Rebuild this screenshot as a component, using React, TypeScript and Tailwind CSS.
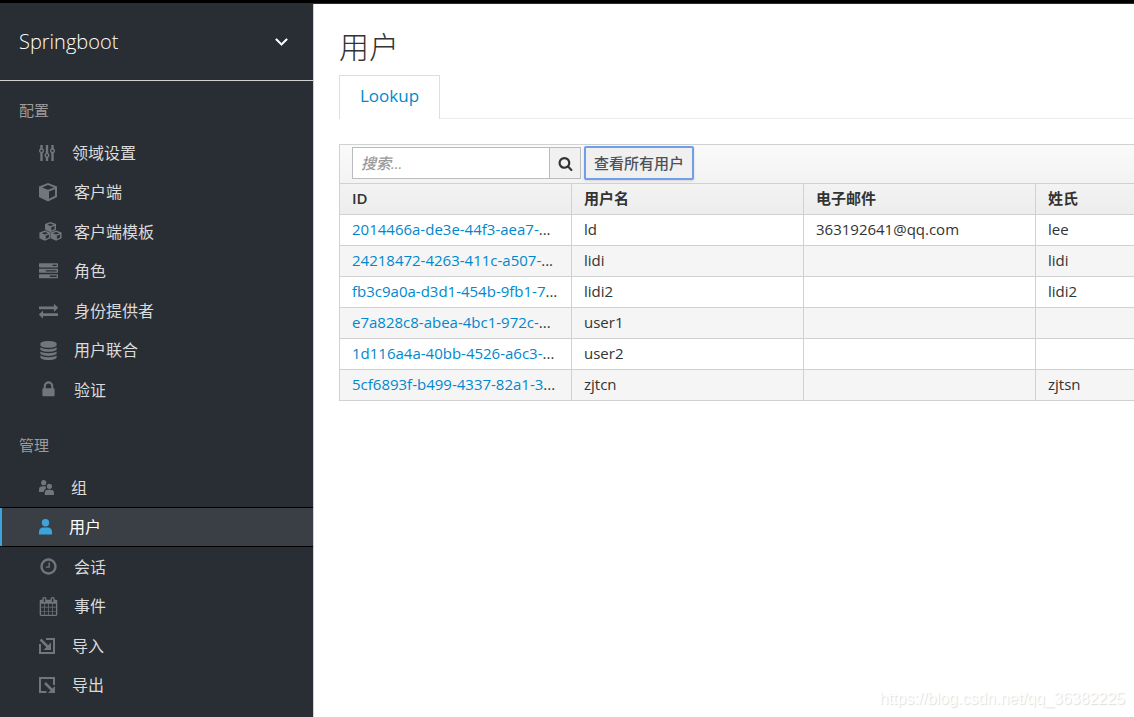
import type { ReactNode } from "react";

const faPaths = {
    angleDown:
        "M1395 736q0 13-10 23l-466 466q-10 10-23 10t-23-10l-466-466q-10-10-10-23t10-23l50-50q10-10 23-10t23 10l393 393 393-393q10-10 23-10t23 10l50 50q10 10 10 23z",
    tasks: "M1024 1408h640v-128h-640v128zm-384-512h1024v-128h-1024v128zm640-512h384v-128h-384v128zm512 832v256q0 26-19 45t-45 19h-1664q-26 0-45-19t-19-45v-256q0-26 19-45t45-19h1664q26 0 45 19t19 45zm0-512v256q0 26-19 45t-45 19h-1664q-26 0-45-19t-19-45v-256q0-26 19-45t45-19h1664q26 0 45 19t19 45zm0-512v256q0 26-19 45t-45 19h-1664q-26 0-45-19t-19-45v-256q0-26 19-45t45-19h1664q26 0 45 19t19 45z",
    exchange:
        "M1792 1184v192q0 13-9.5 22.5t-22.5 9.5h-1376v192q0 13-9.5 22.5t-22.5 9.5q-12 0-24-10l-319-320q-9-9-9-22 0-14 9-23l320-320q9-9 23-9 13 0 22.5 9.5t9.5 22.5v192h1376q13 0 22.5 9.5t9.5 22.5zm0-544q0 14-9 23l-320 320q-9 9-23 9-13 0-22.5-9.5t-9.5-22.5v-192h-1376q-13 0-22.5-9.5t-9.5-22.5v-192q0-13 9.5-22.5t22.5-9.5h1376v-192q0-14 9-23t23-9q12 0 24 10l319 319q9 9 9 23z",
    database:
        "M896 768q237 0 443-43t325-127v170q0 69-103 128t-280 93.5-385 34.5-385-34.5-280-93.5-103-128v-170q119 84 325 127t443 43zm0 768q237 0 443-43t325-127v170q0 69-103 128t-280 93.5-385 34.5-385-34.5-280-93.5-103-128v-170q119 84 325 127t443 43zm0-384q237 0 443-43t325-127v170q0 69-103 128t-280 93.5-385 34.5-385-34.5-280-93.5-103-128v-170q119 84 325 127t443 43zm0-1152q208 0 385 34.5t280 93.5 103 128v128q0 69-103 128t-280 93.5-385 34.5-385-34.5-280-93.5-103-128v-128q0-69 103-128t280-93.5 385-34.5z",
    lock: "M640 768h512v-192q0-106-75-181t-181-75-181 75-75 181v192zm832 96v576q0 40-28 68t-68 28h-960q-40 0-68-28t-28-68v-576q0-40 28-68t68-28h32v-192q0-184 132-316t316-132 316 132 132 316v192h32q40 0 68 28t28 68z",
    clock: "M1024 544v448q0 14-9 23t-23 9h-320q-14 0-23-9t-9-23v-64q0-14 9-23t23-9h224v-352q0-14 9-23t23-9h64q14 0 23 9t9 23zm416 352q0-148-73-273t-198-198-273-73-273 73-198 198-73 273 73 273 198 198 273 73 273-73 198-198 73-273zm224 0q0 209-103 385.5t-279.5 279.5-385.5 103-385.5-103-279.5-279.5-103-385.5 103-385.5 279.5-279.5 385.5-103 385.5 103 279.5 279.5 103 385.5z",
    calendar:
        "M192 1664h288v-288h-288v288zm352 0h320v-288h-320v288zm-352-352h288v-320h-288v320zm352 0h320v-320h-320v320zm-352-384h288v-288h-288v288zm736 736h320v-288h-320v288zm-384-736h320v-288h-320v288zm768 736h288v-288h-288v288zm-384-352h320v-320h-320v320zm-352-864v-288q0-13-9.5-22.5t-22.5-9.5h-64q-13 0-22.5 9.5t-9.5 22.5v288q0 13 9.5 22.5t22.5 9.5h64q13 0 22.5-9.5t9.5-22.5zm736 864h288v-320h-288v320zm-384-384h320v-288h-320v288zm384 0h288v-288h-288v288zm32-480v-288q0-13-9.5-22.5t-22.5-9.5h-64q-13 0-22.5 9.5t-9.5 22.5v288q0 13 9.5 22.5t22.5 9.5h64q13 0 22.5-9.5t9.5-22.5zm384-64v1280q0 52-38 90t-90 38h-1408q-52 0-90-38t-38-90v-1280q0-52 38-90t90-38h128v-96q0-66 47-113t113-47h64q66 0 113 47t47 113v96h384v-96q0-66 47-113t113-47h64q66 0 113 47t47 113v96h128q52 0 90 38t38 90z",
    search: "M1216 832q0-185-131.500-316.500t-316.500-131.500-316.500 131.500-131.500 316.500 131.500 316.500 316.500 131.500 316.500-131.500 131.500-316.500zm512 832q0 52-38 90t-90 38q-54 0-90-38l-343-342q-179 124-399 124-143 0-273.500-55.500t-225-150-150-225-55.500-273.500 55.500-273.500 150-225 225-150 273.500-55.500 273.500 55.500 225 150 150 225 55.500 273.500q0 220-124 399l343 343q37 37 37 90z",
};

function FaIcon({
    name,
    className = "size-[19px]",
}: {
    name: keyof typeof faPaths;
    className?: string;
}) {
    return (
        <svg viewBox="0 0 1792 1792" fill="currentColor" className={className}>
            <path d={faPaths[name]} />
        </svg>
    );
}

const cubePath =
    "M9 0 18 3.500V14L9 18.500 0 14V3.500ZM9 2 3 4.400 9 6.700 15 4.400ZM10 8.600V15.700L16 12.700V6.300Z";

function CubeIcon() {
    return (
        <svg viewBox="0 0 18 19" fill="currentColor" fillRule="evenodd" className="h-[19px] w-[18px]">
            <path d={cubePath} />
        </svg>
    );
}

// same cube with thicker edges, so that it stays readable at a small size
const smallCubePath =
    "M5.900 0 11.400 2V7.800L5.900 10.300 0.400 7.800V2ZM5.900 1.500 2.700 2.700 5.900 3.900 9.100 2.700ZM6.700 5.200V8.500L9.900 7V3.900Z";

function CubesIcon() {
    return (
        <svg viewBox="0 0 23 19" fill="currentColor" fillRule="evenodd" className="h-[19px] w-[23px]">
            <path d={smallCubePath} transform="translate(5.600 0)" />
            <path d={smallCubePath} transform="translate(0 8.500)" />
            <path d={smallCubePath} transform="translate(11.200 8.500)" />
        </svg>
    );
}

function SlidersIcon() {
    return (
        <svg viewBox="0 0 16 16" fill="none" stroke="currentColor" strokeWidth="2.400" className="size-4">
            <path d="M2.500 0v4M2.500 8v8M8 0v8M8 12v4M13.500 0v4M13.500 8v8" />
            <g strokeWidth="1.400">
                <circle cx="2.500" cy="5.800" r="1.800" />
                <circle cx="8" cy="10.300" r="1.800" />
                <circle cx="13.500" cy="5.800" r="1.800" />
            </g>
        </svg>
    );
}

function GroupIcon() {
    return (
        <svg viewBox="0 0 15 15" fill="currentColor" className="size-[15px]">
            <circle cx="4.700" cy="2.700" r="2.600" />
            <path d="M0 12V9.500Q0 6.200 3.500 6.200H5.500Q7 6.200 7 7.500 7 9 5.500 10 4.800 10.700 4.600 12Z" />
            <circle cx="10.400" cy="6.300" r="2.600" />
            <path d="M5.800 15V13Q5.800 9.800 9.300 9.800H11.500Q15 9.800 15 13V15Z" />
        </svg>
    );
}

function UserIcon() {
    return (
        <svg viewBox="0 0 13 16" fill="currentColor" className="h-4 w-[13px]">
            <circle cx="6.500" cy="3.700" r="3.700" />
            <path d="M0 15.500V13Q0 8.400 4.500 8.400H8.500Q13 8.400 13 13V15.500Z" />
        </svg>
    );
}

function ImportIcon() {
    return (
        <svg viewBox="0 0 16 16" fill="none" stroke="currentColor" strokeWidth="2" className="size-4">
            <path d="M7 1H15V15H1V6" />
            <path d="M1.500 1.500 9 9" strokeWidth="2.500" />
            <path d="M12 4.500V12H4.500Z" fill="currentColor" stroke="none" />
        </svg>
    );
}

function ExportIcon() {
    return (
        <svg viewBox="0 0 16 16" fill="none" stroke="currentColor" strokeWidth="2" className="size-4">
            <path d="M7.500 15H1V1H15V8" />
            <path d="M6 6 13 13" strokeWidth="2.500" />
            <path d="M16 9V16H9Z" fill="currentColor" stroke="none" />
        </svg>
    );
}

type TMenuItem = {
    label: string;
    icon: ReactNode;
    gap?: string;
    active?: boolean;
};

const configItems: TMenuItem[] = [
    { label: "领域设置", icon: <SlidersIcon />, gap: "gap-[17px]" },
    { label: "客户端", icon: <CubeIcon />, gap: "gap-[17px]" },
    { label: "客户端模板", icon: <CubesIcon />, gap: "gap-3" },
    { label: "角色", icon: <FaIcon name="tasks" /> },
    { label: "身份提供者", icon: <FaIcon name="exchange" /> },
    { label: "用户联合", icon: <FaIcon name="database" /> },
    { label: "验证", icon: <FaIcon name="lock" /> },
];

const manageItems: TMenuItem[] = [
    { label: "组", icon: <GroupIcon />, gap: "gap-[17px]" },
    { label: "用户", icon: <UserIcon />, gap: "gap-[17px]", active: true },
    { label: "会话", icon: <FaIcon name="clock" /> },
    { label: "事件", icon: <FaIcon name="calendar" /> },
    { label: "导入", icon: <ImportIcon />, gap: "gap-[17px]" },
    { label: "导出", icon: <ExportIcon />, gap: "gap-[17px]" },
];

function MenuSection({ title, items }: { title: string; items: TMenuItem[] }) {
    return (
        <section>
            <h2 className="px-[19px] text-[15px] leading-5 text-[#9c9c9c]">{title}</h2>
            <ul className="mt-[13px]">
                {items.map(({ label, icon, gap = "gap-4", active }) => (
                    <li
                        key={label}
                        className={
                            active
                                ? "odd:h-[39px] even:h-10 border-y border-black bg-[#393f45]"
                                : "odd:h-[39px] even:h-10"
                        }
                    >
                        <a
                            href="#"
                            className={`flex h-full items-center border-l-2 pl-[37px] ${gap} ${
                                active
                                    ? "border-[#39a5dc] text-white"
                                    : "border-transparent text-[#dbdbdb]"
                            }`}
                        >
                            <span className={active ? "text-[#39a5dc]" : "text-[#72767b]"}>
                                {icon}
                            </span>
                            <span className="text-base">{label}</span>
                        </a>
                    </li>
                ))}
            </ul>
        </section>
    );
}

const users = [
    { id: "2014466a-de3e-44f3-aea7-", username: "ld", email: "363192641@qq.com", lastName: "lee" },
    { id: "24218472-4263-411c-a507-", username: "lidi", email: "", lastName: "lidi" },
    { id: "fb3c9a0a-d3d1-454b-9fb1-7", username: "lidi2", email: "", lastName: "lidi2" },
    { id: "e7a828c8-abea-4bc1-972c-", username: "user1", email: "", lastName: "" },
    { id: "1d116a4a-40bb-4526-a6c3-", username: "user2", email: "", lastName: "" },
    { id: "5cf6893f-b499-4337-82a1-3", username: "zjtcn", email: "", lastName: "zjtsn" },
];

function UsersTable() {
    const cell = "border border-[#d1d1d1] px-3 pt-0 pb-0.5 whitespace-nowrap";

    return (
        <table className="w-full table-fixed border-collapse border-l border-[#d1d1d1] text-[15px] leading-5 text-[#333]">
            <colgroup>
                <col className="w-[232px]" />
                <col className="w-[232px]" />
                <col className="w-[232px]" />
                <col />
            </colgroup>
            <thead className="bg-linear-to-b from-[#fafafa] to-[#ededed] text-left">
                <tr className="h-[39px]">
                    <th colSpan={4} className="border border-r-0 border-[#d1d1d1] px-3 pt-0 pb-0.5 font-normal">
                        <div className="flex items-center gap-[3px]">
                            <div className="flex h-8">
                                <input
                                    type="text"
                                    aria-label="搜索"
                                    placeholder="搜索..."
                                    className="w-[198px] border border-[#bbb] bg-white px-2 text-[15px] placeholder:font-medium placeholder:italic placeholder:text-[#999]"
                                />
                                <button
                                    type="button"
                                    aria-label="搜索"
                                    className="flex w-[31px] items-center justify-center border border-l-0 border-[#bbb] bg-[#f1f1f1] text-[#333]"
                                >
                                    <FaIcon name="search" className="size-[15px]" />
                                </button>
                            </div>
                            <button
                                type="button"
                                className="h-[34px] rounded-xs border-2 border-[#6f9fe8] bg-[#f0f0f0] px-2 text-[15px] font-medium text-[#4d5258] shadow"
                            >
                                查看所有用户
                            </button>
                        </div>
                    </th>
                </tr>
                <tr className="h-[31px]">
                    <th className={`${cell} font-semibold`}>ID</th>
                    <th className={`${cell} font-bold`}>用户名</th>
                    <th className={`${cell} font-bold`}>电子邮件</th>
                    <th className={`${cell} border-r-0 font-bold`}>姓氏</th>
                </tr>
            </thead>
            <tbody>
                {users.map((user) => (
                    <tr key={user.id} className="h-[31px] bg-white even:bg-[#f5f5f5]">
                        <td className={cell}>
                            <a href="#" className="text-[#0088ce]">
                                {user.id}
                            </a>
                            ...
                        </td>
                        <td className={cell}>{user.username}</td>
                        <td className={cell}>{user.email}</td>
                        <td className={`${cell} border-r-0`}>{user.lastName}</td>
                    </tr>
                ))}
            </tbody>
        </table>
    );
}

export default function App() {
    return (
        <div className="relative flex min-h-screen flex-col overflow-hidden bg-white font-['Open_Sans','Noto_Sans_CJK_SC',sans-serif]">
            <div className="h-1 border-b border-[#292e34] bg-black" />
            <div className="flex flex-1">
                <aside className="w-[314px] shrink-0 border-r border-[#d1d1d1] bg-[#292e34]">
                    <button
                        type="button"
                        className="flex h-[77px] w-full items-center justify-between border-b border-[#d1d1d1] pr-[21px] pl-[19px] text-xl font-light text-white"
                    >
                        Springboot
                        <FaIcon
                            name="angleDown"
                            className="mb-0.5 size-[21px] stroke-current stroke-[60]"
                        />
                    </button>
                    <nav className="flex flex-col gap-[26px] pt-[19px]">
                        <MenuSection title="配置" items={configItems} />
                        <MenuSection title="管理" items={manageItems} />
                    </nav>
                </aside>
                <main className="min-w-0 flex-1 pt-[23px] pl-[25px]">
                    <h1 className="text-[30px] leading-10 font-light text-[#333]">用户</h1>
                    <div className="mt-2 flex border-b border-[#ededed]">
                        <a
                            href="#"
                            className="-mb-px border border-b-0 border-[#dedede] bg-white px-5 pt-2 pb-[11px] text-[17px] leading-6 text-[#0088ce]"
                        >
                            Lookup
                        </a>
                    </div>
                    <div className="mt-[25px]">
                        <UsersTable />
                    </div>
                </main>
            </div>
            <p className="absolute right-[9px] bottom-2 font-['Liberation_Sans',sans-serif] text-base leading-5 text-white [text-shadow:1px_1px_1px_#ddd]">
                https://blog.csdn.net/qq_36382225
            </p>
        </div>
    );
}
